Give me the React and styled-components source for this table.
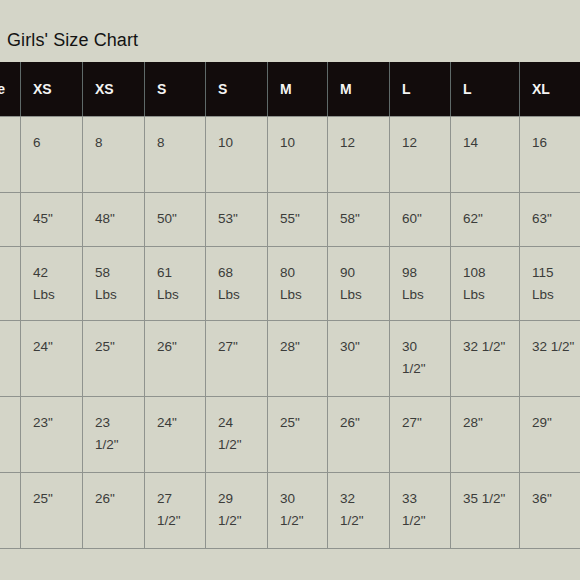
import React from 'react';
import styled, { createGlobalStyle } from 'styled-components';

/* Girls' size chart – cropped view of a wide table */

const Global = createGlobalStyle`
  html, body {
    margin: 0;
    padding: 0;
    background: #d4d5c8;
    overflow: hidden;
  }
  body {
    font-family: "Liberation Sans", Arial, sans-serif;
  }
`;

const Page = styled.div`
  width: 580px;
  height: 580px;
  overflow: hidden;
  padding-top: 29px;
  box-sizing: border-box;
`;

const Title = styled.h2`
  margin: 0 0 11px 7px;
  font-size: 18px;
  line-height: 22px;
  font-weight: 400;
  color: #131313;
  letter-spacing: 0.1px;
`;

const Table = styled.table`
  margin-left: -75px;
  border-collapse: collapse;
  table-layout: fixed;
  width: ${({ $w }) => $w}px;
`;

const HeadCell = styled.th`
  height: 54px;
  padding: 0 0 0 12px;
  background: #120c0c;
  color: #f4f4f4;
  font-size: 14px;
  font-weight: 700;
  text-align: left;
  vertical-align: middle;
  white-space: nowrap;
  border-left: 1px solid #5f6a69;
  border-bottom: 1px solid #8d918c;
`;

const Cell = styled.td`
  height: ${({ $h }) => $h}px;
  padding: 15px 4px 0 12px;
  box-sizing: border-box;
  font-size: 13.5px;
  line-height: 22px;
  color: #3b3c3a;
  text-align: left;
  vertical-align: top;
  white-space: nowrap;
  border: 1px solid #8f938e;
`;

const widths = [95, 62, 62, 61, 62, 60, 62, 61, 69, 70];
const totalWidth = widths.reduce((a, b) => a + b, 0);

const header = ["Girls' Size", 'XS', 'XS', 'S', 'S', 'M', 'M', 'L', 'L', 'XL'];

const rows = [
  { h: 76, cells: ['', '6', '8', '8', '10', '10', '12', '12', '14', '16'] },
  { h: 54, cells: ['', '45"', '48"', '50"', '53"', '55"', '58"', '60"', '62"', '63"'] },
  {
    h: 74,
    cells: ['', '42|Lbs', '58|Lbs', '61|Lbs', '68|Lbs', '80|Lbs', '90|Lbs', '98|Lbs', '108|Lbs', '115|Lbs'],
  },
  { h: 76, cells: ['', '24"', '25"', '26"', '27"', '28"', '30"', '30|1/2"', '32 1/2"', '32 1/2"'] },
  { h: 76, cells: ['', '23"', '23|1/2"', '24"', '24|1/2"', '25"', '26"', '27"', '28"', '29"'] },
  { h: 76, cells: ['', '25"', '26"', '27|1/2"', '29|1/2"', '30|1/2"', '32|1/2"', '33|1/2"', '35 1/2"', '36"'] },
];

function Lines({ text }) {
  const parts = text.split('|');
  return parts.map((p, i) => (
    <React.Fragment key={i}>
      {i > 0 && <br />}
      {p}
    </React.Fragment>
  ));
}

export default function App() {
  return (
    <Page>
      <Global />
      <Title>Girls' Size Chart</Title>
      <Table $w={totalWidth}>
        <colgroup>
          {widths.map((w, i) => (
            <col key={i} style={{ width: w }} />
          ))}
        </colgroup>
        <thead>
          <tr>
            {header.map((h, i) => (
              <HeadCell key={i}>{h}</HeadCell>
            ))}
          </tr>
        </thead>
        <tbody>
          {rows.map((r, ri) => (
            <tr key={ri}>
              {r.cells.map((c, ci) => (
                <Cell key={ci} $h={r.h}>
                  <Lines text={c} />
                </Cell>
              ))}
            </tr>
          ))}
        </tbody>
      </Table>
    </Page>
  );
}
